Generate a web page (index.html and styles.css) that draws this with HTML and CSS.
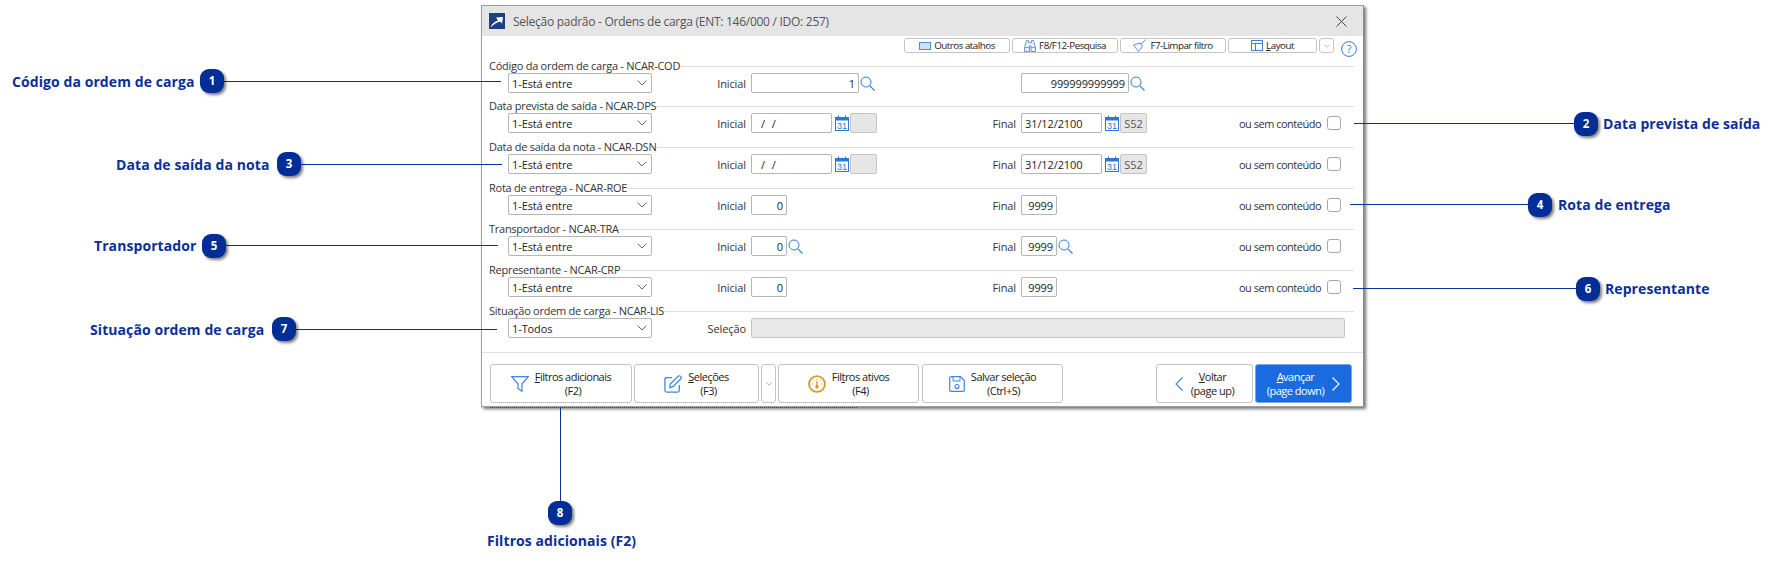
FILE: index.html
```html
<!DOCTYPE html>
<html lang="pt-BR">
<head>
<meta charset="utf-8">
<title>Seleção padrão - Ordens de carga</title>
<link rel="stylesheet" href="styles.css">
</head>
<body>
<svg width="0" height="0" class="defs">
  <defs>
    <symbol id="i-search" viewBox="0 0 15 15"><circle cx="6" cy="6" r="5" fill="none" stroke="#2f7fd6" stroke-width="1"/><path d="M9.6 9.6 14.5 14.5" stroke="#2f7fd6" stroke-width="1.1" fill="none"/></symbol>
    <symbol id="i-cal" viewBox="0 0 14 16"><rect x="0.5" y="2.5" width="13" height="13" fill="#fff" stroke="#2a78d8"/><path d="M0 2.5h14v3H0z" fill="#2a78d8"/><path d="M3.5 0.5v3M10.5 0.5v3" stroke="#2a78d8"/><text x="7" y="14" text-anchor="middle" class="cal-t">31</text></symbol>
    <symbol id="i-chev" viewBox="0 0 10 6"><path d="M0.5 0.5 5 5 9.5 0.5" fill="none" stroke="#666" stroke-width="1"/></symbol>
  </defs>
</svg>

<main class="window">
  <header class="titlebar">
    <svg class="app-icon" viewBox="0 0 16 16" width="16" height="16"><rect width="16" height="16" fill="#1f3f7f"/><path d="M1.500 14.500C3 10.500 5.500 8.500 9 7.500L7 4.500l7-.5-1 6.500-2-2C8 9 5 11 1.500 14.500z" fill="#fff"/></svg>
    <span class="title">Seleção padrão - Ordens de carga (ENT: 146/000 / IDO: 257)</span>
    <svg class="close" viewBox="0 0 11 11" width="11" height="11"><path d="M.5.5l10 10M10.500.5l-10 10" stroke="#444" fill="none"/></svg>
  </header>

  <nav class="toolbar">
    <button class="tbtn w-tb"><svg width="12" height="8" viewBox="0 0 12 8"><rect x=".5" y=".5" width="11" height="7" fill="#cfe0f7" stroke="#4a8ad8"/></svg>Outros atalhos</button>
    <button class="tbtn w-tb"><svg width="12" height="12" viewBox="0 0 12 12"><path d="M2.500.5h2v2h3v-2h2l2 7v4h-4.500V6h-1.500v5.500H.5v-4z" fill="#e8f0fb" stroke="#5a8fd0" stroke-width=".9"/><path d="M.7 7.500h4.300M7 7.500h4.300" stroke="#5a8fd0" stroke-width=".8"/></svg>F8/F12-Pesquisa</button>
    <button class="tbtn w-tb"><svg width="14" height="13" viewBox="0 0 14 13"><path d="M.5 6 7 4l2.500 3.500-4 5z" fill="#fff" stroke="#5a8fd0"/><path d="M8 5l5-4.500" stroke="#5a8fd0"/></svg>F7-Limpar filtro</button>
    <button class="tbtn w-layout"><svg width="12" height="11" viewBox="0 0 12 11"><rect x=".5" y=".5" width="11" height="10" fill="#fff" stroke="#3f84d8"/><path d="M.5 3.500h11M4.500 3.500v7" stroke="#3f84d8" fill="none"/></svg><span><u>L</u>ayout</span></button>
    <button class="tbtn w-more"><svg width="6" height="4" viewBox="0 0 10 6"><path d="M.5.500 5 5 9.500.500" fill="none" stroke="#5a8fd0"/></svg></button>
    <svg class="help" viewBox="0 0 16 16" width="16" height="16"><circle cx="8" cy="8" r="7.400" fill="none" stroke="#2f7fd6"/><text x="8" y="12" text-anchor="middle" class="help-t">?</text></svg>
  </nav>

  <section class="form">
    <div class="group">
      <div class="legend"><span>Código da ordem de carga - NCAR-COD</span></div>
      <div class="row">
        <div class="select"><span>1-Está entre</span><svg width="10" height="6"><use href="#i-chev"/></svg></div>
        <label class="lbl">Inicial</label>
        <div class="col-a"><div class="input num w108">1</div><svg class="ic-s" width="15" height="15"><use href="#i-search"/></svg></div>
        <label class="lbl-b"></label>
        <div class="col-b"><div class="input num w108">999999999999</div><svg class="ic-s" width="15" height="15"><use href="#i-search"/></svg></div>
      </div>
    </div>

    <div class="group">
      <div class="legend"><span>Data prevista de saída - NCAR-DPS</span></div>
      <div class="row">
        <div class="select"><span>1-Está entre</span><svg width="10" height="6"><use href="#i-chev"/></svg></div>
        <label class="lbl">Inicial</label>
        <div class="col-a"><div class="input w81 date">/ /</div><svg class="ic-c" width="14" height="16"><use href="#i-cal"/></svg><div class="week"></div></div>
        <label class="lbl-b">Final</label>
        <div class="col-b"><div class="input w81">31/12/2100</div><svg class="ic-c" width="14" height="16"><use href="#i-cal"/></svg><div class="week">S52</div></div>
        <span class="empty">ou sem conteúdo</span><span class="check"></span>
      </div>
    </div>

    <div class="group">
      <div class="legend"><span>Data de saída da nota - NCAR-DSN</span></div>
      <div class="row">
        <div class="select"><span>1-Está entre</span><svg width="10" height="6"><use href="#i-chev"/></svg></div>
        <label class="lbl">Inicial</label>
        <div class="col-a"><div class="input w81 date">/ /</div><svg class="ic-c" width="14" height="16"><use href="#i-cal"/></svg><div class="week"></div></div>
        <label class="lbl-b">Final</label>
        <div class="col-b"><div class="input w81">31/12/2100</div><svg class="ic-c" width="14" height="16"><use href="#i-cal"/></svg><div class="week">S52</div></div>
        <span class="empty">ou sem conteúdo</span><span class="check"></span>
      </div>
    </div>

    <div class="group">
      <div class="legend"><span>Rota de entrega - NCAR-ROE</span></div>
      <div class="row">
        <div class="select"><span>1-Está entre</span><svg width="10" height="6"><use href="#i-chev"/></svg></div>
        <label class="lbl">Inicial</label>
        <div class="col-a"><div class="input num w36">0</div></div>
        <label class="lbl-b">Final</label>
        <div class="col-b"><div class="input num w36">9999</div></div>
        <span class="empty">ou sem conteúdo</span><span class="check"></span>
      </div>
    </div>

    <div class="group">
      <div class="legend"><span>Transportador - NCAR-TRA</span></div>
      <div class="row">
        <div class="select"><span>1-Está entre</span><svg width="10" height="6"><use href="#i-chev"/></svg></div>
        <label class="lbl">Inicial</label>
        <div class="col-a"><div class="input num w36">0</div><svg class="ic-s" width="15" height="15"><use href="#i-search"/></svg></div>
        <label class="lbl-b">Final</label>
        <div class="col-b"><div class="input num w36">9999</div><svg class="ic-s" width="15" height="15"><use href="#i-search"/></svg></div>
        <span class="empty">ou sem conteúdo</span><span class="check"></span>
      </div>
    </div>

    <div class="group">
      <div class="legend"><span>Representante - NCAR-CRP</span></div>
      <div class="row">
        <div class="select"><span>1-Está entre</span><svg width="10" height="6"><use href="#i-chev"/></svg></div>
        <label class="lbl">Inicial</label>
        <div class="col-a"><div class="input num w36">0</div></div>
        <label class="lbl-b">Final</label>
        <div class="col-b"><div class="input num w36">9999</div></div>
        <span class="empty">ou sem conteúdo</span><span class="check"></span>
      </div>
    </div>

    <div class="group">
      <div class="legend"><span>Situação ordem de carga - NCAR-LIS</span></div>
      <div class="row">
        <div class="select"><span>1-Todos</span><svg width="10" height="6"><use href="#i-chev"/></svg></div>
        <label class="lbl">Seleção</label>
        <div class="selection"></div>
      </div>
    </div>
  </section>

  <footer class="actions">
    <button class="abtn w-142"><svg width="18" height="16" viewBox="0 0 18 16"><path d="M.7.7h16.600L11 8v7.300L7 12.500V8z" fill="none" stroke="#3f84e0" stroke-width="1.200"/></svg><span><u>F</u>iltros adicionais<br>(F2)</span></button>
    <button class="abtn w-sel"><svg width="18" height="18" viewBox="0 0 20 20"><path d="M9 3H3a2 2 0 0 0-2 2v12a2 2 0 0 0 2 2h12a2 2 0 0 0 2-2v-6" fill="none" stroke="#3f84e0" stroke-width="1.400"/><path d="M7 10 15.500 1.500a1.500 1.500 0 0 1 3 3L10 13l-3.500 1z" fill="none" stroke="#3f84e0" stroke-width="1.400"/></svg><span><u>S</u>eleções<br>(F3)</span></button>
    <button class="abtn w-drop"><svg width="6" height="4" viewBox="0 0 10 6"><path d="M.5.500 5 5 9.500.500" fill="none" stroke="#4a8ad8"/></svg></button>
    <button class="abtn w-141"><svg width="18" height="18" viewBox="0 0 19 19"><circle cx="9.500" cy="9.500" r="8.400" fill="none" stroke="#d89a26" stroke-width="1.900"/><path d="M9.500 6v6" stroke="#d89a26" stroke-width="1.500"/><circle cx="9.500" cy="12.500" r="1.900" fill="#d89a26"/><path d="M9.500 3.500v1.500M5.500 5l1 1M13.500 5l-1 1M3.500 9.500h1.500M14 9.500h1.500" stroke="#d89a26"/></svg><span>Fil<u>t</u>ros ativos<br>(F4)</span></button>
    <button class="abtn w-141 w-salvar"><svg width="16" height="16" viewBox="0 0 16 16"><path d="M2 .7h9.500L15.300 4.500V14a1.300 1.300 0 0 1-1.300 1.300H2A1.300 1.300 0 0 1 .7 14V2A1.300 1.300 0 0 1 2 .7z" fill="none" stroke="#3f84e0" stroke-width="1.200"/><path d="M4 1v4h7V1" fill="none" stroke="#3f84e0"/><circle cx="8" cy="10.500" r="2" fill="none" stroke="#3f84e0" stroke-width="1.100"/></svg><span>Salvar seleção<br>(Ctrl+S)</span></button>
    <div class="spacer"></div>
    <button class="abtn w-nav"><svg width="8" height="14" viewBox="0 0 8 14"><path d="M7.500.500 1 7l6.500 6.500" fill="none" stroke="#3f84e0" stroke-width="1.100"/></svg><span><u>V</u>oltar<br>(page up)</span></button>
    <button class="abtn w-nav primary"><span><u>A</u>vançar<br>(page down)</span><svg width="8" height="14" viewBox="0 0 8 14"><path d="M.5.500 7 7 .5 13.500" fill="none" stroke="#fff" stroke-width="1.100"/></svg></button>
  </footer>
</main>
<div class="ghost-text"></div>

<div class="callout-line h" style="left:224px;top:81px;width:277px"></div>
<div class="callout-line h" style="left:301px;top:164px;width:201px"></div>
<div class="callout-line h" style="left:225px;top:245px;width:273px"></div>
<div class="callout-line h" style="left:295px;top:329px;width:202px"></div>
<div class="callout-line h" style="left:1354px;top:123px;width:220px"></div>
<div class="callout-line h" style="left:1350px;top:204px;width:178px"></div>
<div class="callout-line h" style="left:1353px;top:288px;width:223px"></div>
<div class="callout-line v" style="left:560px;top:407px;height:94px"></div>

<div class="badge" style="left:200px;top:69px">1</div>
<div class="badge" style="left:277px;top:152px">3</div>
<div class="badge" style="left:202px;top:234px">5</div>
<div class="badge" style="left:272px;top:317px">7</div>
<div class="badge" style="left:1574px;top:112px">2</div>
<div class="badge" style="left:1528px;top:193px">4</div>
<div class="badge" style="left:1576px;top:277px">6</div>
<div class="badge" style="left:548px;top:501px">8</div>

<div class="note" style="left:12px;top:72px">Código da ordem de carga</div>
<div class="note" style="left:116px;top:155px">Data de saída da nota</div>
<div class="note" style="left:94px;top:236px">Transportador</div>
<div class="note" style="left:90px;top:320px">Situação ordem de carga</div>
<div class="note" style="left:1603px;top:114px">Data prevista de saída</div>
<div class="note" style="left:1558px;top:195px">Rota de entrega</div>
<div class="note" style="left:1605px;top:279px">Representante</div>
<div class="note" style="left:487px;top:531px">Filtros adicionais (F2)</div>
</body>
</html>
```
FILE: styles.css
```css
* { box-sizing: border-box; }
html, body { margin: 0; padding: 0; background: #fff; }
body { width: 1779px; height: 567px; position: relative; overflow: hidden; font-family: "Open Sans", "Noto Sans", sans-serif; }
.defs { position: absolute; }
.cal-t { font: 9px "Liberation Sans", sans-serif; fill: #2a78d8; }
.help-t { font: 11px "Open Sans", sans-serif; fill: #2f7fd6; }

.window {
  position: absolute; left: 481px; top: 5px; width: 883px; height: 402px;
  background: #fff; border: 1px solid #a0a0a0; border-right-color: #8a8a8a;
  box-shadow: 2px 2px 3px rgba(0,0,0,.55);
  display: flex; flex-direction: column;
  font-size: 11px; color: #222; letter-spacing: -.1px;
}
.titlebar { height: 30px; flex: none; background: #e5e5e5; display: flex; align-items: center; padding: 0 8px 0 7px; }
.app-icon { flex: none; }
.title { margin-left: 8px; font-size: 12px; letter-spacing: -.27px; color: #555; flex: 1; }
.close { margin-right: 8px; }

.toolbar { height: 21px; flex: none; display: flex; align-items: flex-start; padding: 2px 0 0 422px; gap: 2px; }
.tbtn { height: 15px; padding: 0; display: flex; align-items: center; justify-content: center; gap: 3px; background: #fff; border: 1px solid #c4c4c4; border-radius: 3px; font: inherit; font-size: 9.8px; color: #222; letter-spacing: -.5px; white-space: nowrap; }
.w-tb { width: 106px; }
.w-layout { width: 89px; }
.w-more { width: 15px; }
.help { margin: 3px 0 0 5px; flex: none; }

.form { flex: 1; display: flex; flex-direction: column; padding: 0 9px 0 7px; }
.group { height: 41px; flex: none; }
.group:first-child { height: 40px; }
.legend { height: 16px; display: flex; align-items: center; line-height: 15px; color: #333; letter-spacing: -.26px; white-space: nowrap; }
.legend::after { content: ""; flex: 1; height: 1px; background: #dedede; margin-top: 2px; }
.row { display: flex; align-items: center; height: 20px; padding-left: 19px; white-space: nowrap; }
.select { width: 144px; height: 20px; border: 1px solid #b5b5b5; border-radius: 2px; display: flex; align-items: center; justify-content: space-between; padding: 0 4px 0 3px; }
.lbl { width: 99px; text-align: right; padding-right: 5px; flex: none; color: #333; }
.lbl-b { width: 40px; text-align: right; padding-right: 5px; flex: none; color: #333; }
.col-a, .col-b { display: flex; align-items: center; flex: none; gap: 1px; }
.col-a { width: 230px; }
.col-b { width: 218px; }
.input { height: 20px; border: 1px solid #b5b5b5; border-radius: 2px; padding: 0 3px; display: flex; align-items: center; background: #fff; }
.num { justify-content: flex-end; }
.w108 { width: 108px; }
.w81 { width: 81px; }
.w36 { width: 36px; }
.date { padding-left: 9px; word-spacing: 4px; }
.ic-c { margin-left: 2px; }
.week { width: 27px; height: 20px; background: #e6e6e6; border: 1px solid #c4c4c4; border-radius: 2px; display: flex; align-items: center; justify-content: center; color: #555; }
.empty { width: 88px; flex: none; letter-spacing: -.5px; color: #333; }
.check { width: 14px; height: 14px; flex: none; border: 1px solid #a8a8a8; border-radius: 3px; }
.selection { width: 594px; height: 20px; background: #e8e8e8; border: 1px solid #c4c4c4; border-radius: 2px; }

.actions { height: 54px; flex: none; border-top: 1px solid #e0e0e0; display: flex; align-items: flex-start; padding: 11px 11px 0 8px; gap: 2px; background: #fff; }
.abtn { height: 39px; padding: 0; display: flex; align-items: center; justify-content: center; gap: 6px; background: #fff; border: 1px solid #c4c4c4; border-radius: 3px; font: inherit; font-size: 11px; line-height: 14px; color: #222; letter-spacing: -.5px; text-align: center; }
.w-142 { width: 142px; }
.w-sel { width: 125px; }
.w-drop { width: 15px; }
.w-141 { width: 141px; }
.w-salvar { margin-left: 1px; }
.w-nav { width: 97px; gap: 8px; }
.primary { background: #1a6be0; color: #fff; border-color: #7aa6e0; }
.spacer { flex: 1; }

.callout-line { position: absolute; background: #0a2f96; }
.callout-line.h { height: 1px; }
.callout-line.v { width: 1px; }
.badge { position: absolute; width: 24px; height: 24px; border-radius: 9px; background: #002d96; color: #fff; font: bold 11.5px/24px "Open Sans", sans-serif; text-align: center; box-shadow: 2px 2px 3px rgba(0,0,0,.5); }
.note { position: absolute; font: bold 14px/20px "Open Sans", sans-serif; letter-spacing: .08px; color: #0b2f96; white-space: nowrap; }
.ghost-text { position: absolute; left: 490px; top: 407px; width: 367px; height: 1px; border-top: 1px dotted #444; }
```
